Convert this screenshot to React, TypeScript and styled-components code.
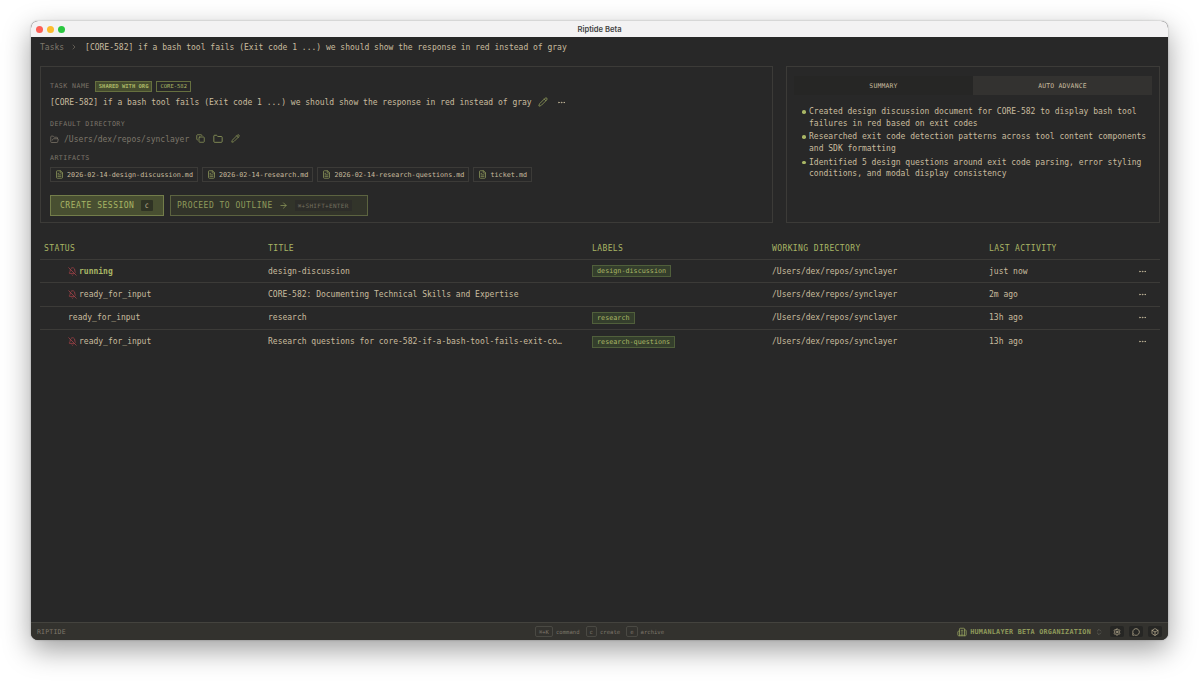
import React from 'react';
import styled, { createGlobalStyle } from 'styled-components';
import {
  ArrowRight, BellOff, Box, Building2, ChevronRight, ChevronsUpDown, Copy, Ellipsis, FileText,
  Folder, FolderOpen, MessageCircle, Pencil, Settings,
} from 'lucide-react';

const mono = '"DejaVu Sans Mono", "Liberation Mono", monospace';
const cream = '#c8bc9f';
const green = '#a9b665';
const olive = '#8f9a5b';
const muted = '#7d766a';
const line = '#3c3b38';

const Global = createGlobalStyle`
  html, body { margin: 0; padding: 0; background: #fff; height: 100%; }
  body { font-family: ${mono}; overflow: hidden; }
  * { box-sizing: border-box; }
`;

const Page = styled.div`
  width: 1200px;
  height: 682px;
  padding: 21px 32px 42px 31px;
  background: #fff;
`;
const Win = styled.div`
  height: 100%;
  display: flex;
  flex-direction: column;
  border-radius: 7px;
  overflow: hidden;
  background: #282828;
  box-shadow: 0 10px 28px rgba(0, 0, 0, 0.38), 0 0 2px rgba(0, 0, 0, 0.3);
`;
const TitleBar = styled.div`
  height: 16px;
  flex: none;
  background: #f3f2f3;
  display: flex;
  align-items: center;
  position: relative;
  justify-content: center;
  font: 600 7.6px "Inter", "Liberation Sans", sans-serif;
  color: #444;
`;
const Lights = styled.div`
  position: absolute;
  left: 5px;
  top: 5px;
  display: flex;
  gap: 4px;
`;
const Light = styled.span<{ $c: string }>`
  width: 7px;
  height: 7px;
  border-radius: 50%;
  background: ${p => p.$c};
`;
const Crumbs = styled.div`
  height: 20px;
  flex: none;
  display: flex;
  align-items: center;
  padding-left: 9px;
  font-size: 8px;
  color: ${cream};
  white-space: pre;
  svg { margin: 0 7px 0 6px; color: ${muted}; }
`;
const CrumbRoot = styled.span`
  color: ${muted};
`;
const Main = styled.div`
  flex: 1;
  min-height: 0;
  padding: 9px 8px 0 9px;
  display: flex;
  flex-direction: column;
`;
const Top = styled.div`
  display: grid;
  grid-template-columns: 733px 374px;
  gap: 13px;
  height: 157px;
`;
const Card = styled.section`
  border: 1px solid ${line};
  min-width: 0;
`;
const TaskCard = styled(Card)`
  padding: 13px 9px 0;
`;
const LabelRow = styled.div`
  display: flex;
  align-items: center;
  gap: 4px;
  height: 12px;
`;
const FieldLabel = styled.div`
  font-size: 6.6px;
  letter-spacing: 0.45px;
  color: ${muted};
  line-height: 12px;
  margin-right: 1px;
`;
const Tag = styled.span<{ $filled?: boolean }>`
  font-size: 5.5px;
  height: 11px;
  padding: 0 3px;
  display: inline-flex;
  align-items: center;
  color: ${green};
  border: 1px solid #66703f;
  background: ${p => (p.$filled ? '#454c2e' : 'transparent')};
  font-weight: ${p => (p.$filled ? 700 : 400)};
`;
const NameRow = styled.div`
  display: flex;
  align-items: center;
  height: 16px;
  margin-top: 2px;
  font-size: 8px;
  color: ${cream};
  white-space: pre;
  svg:first-of-type { margin-left: 6px; color: ${olive}; }
  svg:last-of-type { margin-left: 9px; color: ${cream}; }
`;
const DirLabel = styled(FieldLabel)`
  margin-top: 8px;
`;
const DirRow = styled.div`
  display: flex;
  align-items: center;
  height: 14px;
  margin-top: 2px;
  font-size: 8px;
  color: ${muted};
  gap: 5px;
`;
const DirActions = styled.div`
  display: flex;
  gap: 8px;
  margin-left: 2px;
  color: ${olive};
`;
const ArtLabel = styled(FieldLabel)`
  margin-top: 6px;
`;
const Artifacts = styled.div`
  display: flex;
  gap: 4px;
  margin-top: 3px;
`;
const Artifact = styled.div`
  height: 15px;
  border: 1px solid ${line};
  padding: 0 4px;
  display: flex;
  align-items: center;
  gap: 3px;
  font-size: 6.75px;
  color: ${cream};
  svg { color: ${olive}; }
`;
const Actions = styled.div`
  display: flex;
  gap: 6px;
  margin-top: 13px;
`;
const Primary = styled.button`
  width: 114px;
  height: 21px;
  padding: 0 10px 0 9px;
  background: #484f31;
  border: 1px solid #737d4a;
  display: flex;
  align-items: center;
  justify-content: space-between;
  font: 8px ${mono};
  letter-spacing: 0.5px;
  color: ${green};
`;
const Kbd = styled.span`
  font-size: 6px;
  color: ${cream};
  background: #2f3324;
  padding: 2px 4px;
  border-radius: 1px;
`;
const Secondary = styled.button`
  width: 198px;
  height: 21px;
  padding: 0 6px;
  background: #32342a;
  border: 1px solid #5c6340;
  display: flex;
  align-items: center;
  gap: 6px;
  font: 8px ${mono};
  letter-spacing: 0.5px;
  color: ${olive};
`;
const ShortcutHint = styled.span`
  font-size: 6px;
  letter-spacing: 0.3px;
  color: #736f5f;
  background: #2d2d29;
  padding: 2px 3px;
  margin-left: 1px;
`;
const SummaryCard = styled(Card)`
  padding: 9px 7px 0;
`;
const Tabs = styled.div`
  display: grid;
  grid-template-columns: 1fr 1fr;
  height: 19px;
  background: #333230;
`;
const Tab = styled.div<{ $on?: boolean }>`
  display: flex;
  align-items: center;
  justify-content: center;
  font-size: 6.4px;
  letter-spacing: 0.2px;
  color: ${cream};
  background: ${p => (p.$on ? '#262625' : 'transparent')};
`;
const Bullets = styled.ul`
  list-style: none;
  margin: 11px 0 0;
  padding: 0 0 0 15px;
`;
const Bullet = styled.li`
  position: relative;
  font-size: 8px;
  line-height: 11.7px;
  color: ${cream};
  margin-bottom: 1.9px;
  &::before {
    content: '';
    position: absolute;
    left: -7px;
    top: 4px;
    width: 3.5px;
    height: 3.5px;
    border-radius: 50%;
    background: ${green};
  }
`;
const Table = styled.div`
  margin-top: 14px;
  margin-right: 0;
`;
const cols = '224px 324px 180px 217px 1fr 22px';
const Head = styled.div`
  display: grid;
  grid-template-columns: ${cols};
  height: 23px;
  padding-left: 4px;
  align-items: center;
  font-size: 8px;
  letter-spacing: 0.4px;
  color: ${green};
  border-bottom: 1px solid ${line};
`;
const Row = styled.div`
  display: grid;
  grid-template-columns: ${cols};
  height: 23.4px;
  padding-left: 4px;
  align-items: center;
  font-size: 8px;
  color: ${cream};
  white-space: nowrap;
  &:not(:last-child) { border-bottom: 1px solid ${line}; }
`;
const Status = styled.div<{ $on?: boolean }>`
  display: flex;
  align-items: center;
  gap: 2px;
  padding-left: 24px;
  color: ${p => (p.$on ? green : cream)};
  font-weight: ${p => (p.$on ? 700 : 400)};
  svg { color: #a8434a; }
`;
const Title = styled.div`
  overflow: hidden;
  text-overflow: ellipsis;
  padding-right: 27px;
`;
const Pill = styled.span`
  justify-self: start;
  font-size: 6.75px;
  height: 12px;
  padding: 0 4px;
  display: inline-flex;
  align-items: center;
  color: ${green};
  background: #343e2c;
  border: 1px solid #505f3b;
`;
const More = styled.div`
  display: flex;
  color: ${cream};
`;
const Footer = styled.footer`
  height: 18px;
  flex: none;
  display: grid;
  grid-template-columns: 1fr auto 1fr;
  align-items: center;
  padding: 0 6px;
  background: #33322e;
  border-top: 1px solid #44433e;
`;
const Brand = styled.div`
  font-size: 6.5px;
  letter-spacing: 0.2px;
  color: ${muted};
`;
const Hints = styled.div`
  display: flex;
  align-items: center;
  font-size: 5.6px;
  color: ${muted};
`;
const Key = styled.span`
  border: 1px solid #4a4943;
  border-radius: 2px;
  height: 11px;
  padding: 0 3px;
  display: inline-flex;
  align-items: center;
  margin: 0 3px 0 6px;
  &:first-child { margin-left: 0; }
`;
const FootRight = styled.div`
  display: flex;
  align-items: center;
  justify-content: flex-end;
`;
const Org = styled.div`
  display: flex;
  align-items: center;
  gap: 3px;
  font-size: 6.75px;
  font-weight: 700;
  letter-spacing: 0.25px;
  color: ${olive};
  svg:last-child { color: #6a6a60; margin: 0 7px 0 1px; }
`;
const IconBtn = styled.span`
  width: 14px;
  height: 11px;
  margin-left: 5px;
  display: inline-flex;
  align-items: center;
  justify-content: center;
  background: #262624;
  border-radius: 2px;
  color: ${cream};
  &:first-of-type { margin-left: 0; }
`;

const rows = [
  { status: 'running', on: true, icon: true, title: 'design-discussion', label: 'design-discussion', time: 'just now' },
  { status: 'ready_for_input', icon: true, title: 'CORE-582: Documenting Technical Skills and Expertise', time: '2m ago' },
  { status: 'ready_for_input', title: 'research', label: 'research', time: '13h ago' },
  { status: 'ready_for_input', icon: true, title: 'Research questions for core-582-if-a-bash-tool-fails-exit-code-1', label: 'research-questions', time: '13h ago' },
];
const files = ['2026-02-14-design-discussion.md', '2026-02-14-research.md', '2026-02-14-research-questions.md', 'ticket.md'];
const heading = '[CORE-582] if a bash tool fails (Exit code 1 ...) we should show the response in red instead of gray';

export default function App() {
  return (
    <Page>
      <Global />
      <Win>
        <TitleBar>
          <Lights>
            <Light $c="#fc5f57" />
            <Light $c="#fdbc2e" />
            <Light $c="#2ac740" />
          </Lights>
          Riptide Beta
        </TitleBar>
        <Crumbs>
          <CrumbRoot>Tasks</CrumbRoot>
          <ChevronRight size={8} />
          {heading}
        </Crumbs>
        <Main>
          <Top>
            <TaskCard>
              <LabelRow>
                <FieldLabel>TASK NAME</FieldLabel>
                <Tag $filled>SHARED WITH ORG</Tag>
                <Tag>CORE-582</Tag>
              </LabelRow>
              <NameRow>
                {heading}
                <Pencil size={10} />
                <Ellipsis size={9} />
              </NameRow>
              <DirLabel>DEFAULT DIRECTORY</DirLabel>
              <DirRow>
                <FolderOpen size={9} />
                /Users/dex/repos/synclayer
                <DirActions>
                  <Copy size={9} />
                  <Folder size={10} />
                  <Pencil size={9} />
                </DirActions>
              </DirRow>
              <ArtLabel>ARTIFACTS</ArtLabel>
              <Artifacts>
                {files.map(f => (
                  <Artifact key={f}>
                    <FileText size={9} />
                    {f}
                  </Artifact>
                ))}
              </Artifacts>
              <Actions>
                <Primary>
                  CREATE SESSION
                  <Kbd>C</Kbd>
                </Primary>
                <Secondary>
                  PROCEED TO OUTLINE
                  <ArrowRight size={9} />
                  <ShortcutHint>⌘+SHIFT+ENTER</ShortcutHint>
                </Secondary>
              </Actions>
            </TaskCard>
            <SummaryCard>
              <Tabs>
                <Tab $on>SUMMARY</Tab>
                <Tab>AUTO ADVANCE</Tab>
              </Tabs>
              <Bullets>
                <Bullet>Created design discussion document for CORE-582 to display bash tool failures in red based on exit codes</Bullet>
                <Bullet>Researched exit code detection patterns across tool content components and SDK formatting</Bullet>
                <Bullet>Identified 5 design questions around exit code parsing, error styling conditions, and modal display consistency</Bullet>
              </Bullets>
            </SummaryCard>
          </Top>
          <Table>
            <Head>
              <div>STATUS</div>
              <div>TITLE</div>
              <div>LABELS</div>
              <div>WORKING DIRECTORY</div>
              <div>LAST ACTIVITY</div>
            </Head>
            {rows.map((r, i) => (
              <Row key={i}>
                <Status $on={r.on}>
                  {r.icon && <BellOff size={9} />}
                  {r.status}
                </Status>
                <Title>{r.title}</Title>
                <div style={{ display: 'flex' }}>{r.label && <Pill>{r.label}</Pill>}</div>
                <div>/Users/dex/repos/synclayer</div>
                <div>{r.time}</div>
                <More><Ellipsis size={9} /></More>
              </Row>
            ))}
          </Table>
        </Main>
        <Footer>
          <Brand>RIPTIDE</Brand>
          <Hints>
            <Key>⌘+K</Key>command
            <Key>c</Key>create
            <Key>e</Key>archive
          </Hints>
          <FootRight>
            <Org>
              <Building2 size={10} />
              HUMANLAYER BETA ORGANIZATION
              <ChevronsUpDown size={8} />
            </Org>
            <IconBtn><Settings size={8} /></IconBtn>
            <IconBtn><MessageCircle size={8} /></IconBtn>
            <IconBtn><Box size={8} /></IconBtn>
          </FootRight>
        </Footer>
      </Win>
    </Page>
  );
}
